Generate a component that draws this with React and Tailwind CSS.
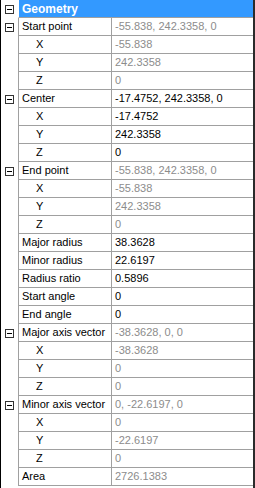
import React from 'react';

const rows = [
  { label: 'Start point', value: '-55.838, 242.3358, 0', group: true, muted: true },
  { label: 'X', value: '-55.838', sub: true, muted: true },
  { label: 'Y', value: '242.3358', sub: true, muted: true },
  { label: 'Z', value: '0', sub: true, muted: true },
  { label: 'Center', value: '-17.4752, 242.3358, 0', group: true },
  { label: 'X', value: '-17.4752', sub: true },
  { label: 'Y', value: '242.3358', sub: true },
  { label: 'Z', value: '0', sub: true },
  { label: 'End point', value: '-55.838, 242.3358, 0', group: true, muted: true },
  { label: 'X', value: '-55.838', sub: true, muted: true },
  { label: 'Y', value: '242.3358', sub: true, muted: true },
  { label: 'Z', value: '0', sub: true, muted: true },
  { label: 'Major radius', value: '38.3628' },
  { label: 'Minor radius', value: '22.6197' },
  { label: 'Radius ratio', value: '0.5896' },
  { label: 'Start angle', value: '0' },
  { label: 'End angle', value: '0' },
  { label: 'Major axis vector', value: '-38.3628, 0, 0', group: true, muted: true },
  { label: 'X', value: '-38.3628', sub: true, muted: true },
  { label: 'Y', value: '0', sub: true, muted: true },
  { label: 'Z', value: '0', sub: true, muted: true },
  { label: 'Minor axis vector', value: '0, -22.6197, 0', group: true, muted: true },
  { label: 'X', value: '0', sub: true, muted: true },
  { label: 'Y', value: '-22.6197', sub: true, muted: true },
  { label: 'Z', value: '0', sub: true, muted: true },
  { label: 'Area', value: '2726.1383', muted: true },
];

const Collapse = () => (
  <div className="w-[9px] h-[9px] border border-[#333] bg-white flex items-center justify-center">
    <div className="w-[5px] h-px bg-black" />
  </div>
);

const App = () => {
  return (
    <div
      className="w-[255px] h-[488px] bg-white border-l border-black border-r-2 border-r-[#2b2b2b] text-[11px] leading-none text-black overflow-hidden"
      style={{ fontFamily: '"Liberation Sans", Arial, sans-serif' }}
    >
      {/* category header */}
      <div className="flex h-[18px]">
        <div className="w-[17px] flex items-center justify-center">
          <Collapse />
        </div>
        <div className="flex-1 flex items-center bg-[#3399ff] border-l border-b border-[#a0a0a0] border-l-white pl-[3px] text-white text-[12px] font-bold">
          Geometry
        </div>
      </div>

      {rows.map((row, i) => (
        <div key={i} className="flex h-[18px]">
          <div className="w-[17px] flex items-center justify-center">
            {row.group && <Collapse />}
          </div>
          <div className="flex-1 flex border-l border-b border-[#a0a0a0]">
            <div
              className={
                row.sub
                  ? 'w-[93px] flex items-center border-r border-[#a0a0a0] pl-[17px]'
                  : 'w-[93px] flex items-center border-r border-[#a0a0a0] pl-[3px] whitespace-nowrap'
              }
            >
              {row.label}
            </div>
            <div
              className={
                row.muted
                  ? 'flex-1 flex items-center pl-[3px] text-[#8c8c8c] whitespace-nowrap'
                  : 'flex-1 flex items-center pl-[3px] whitespace-nowrap'
              }
            >
              {row.value}
            </div>
          </div>
        </div>
      ))}
    </div>
  );
};

export default App;
